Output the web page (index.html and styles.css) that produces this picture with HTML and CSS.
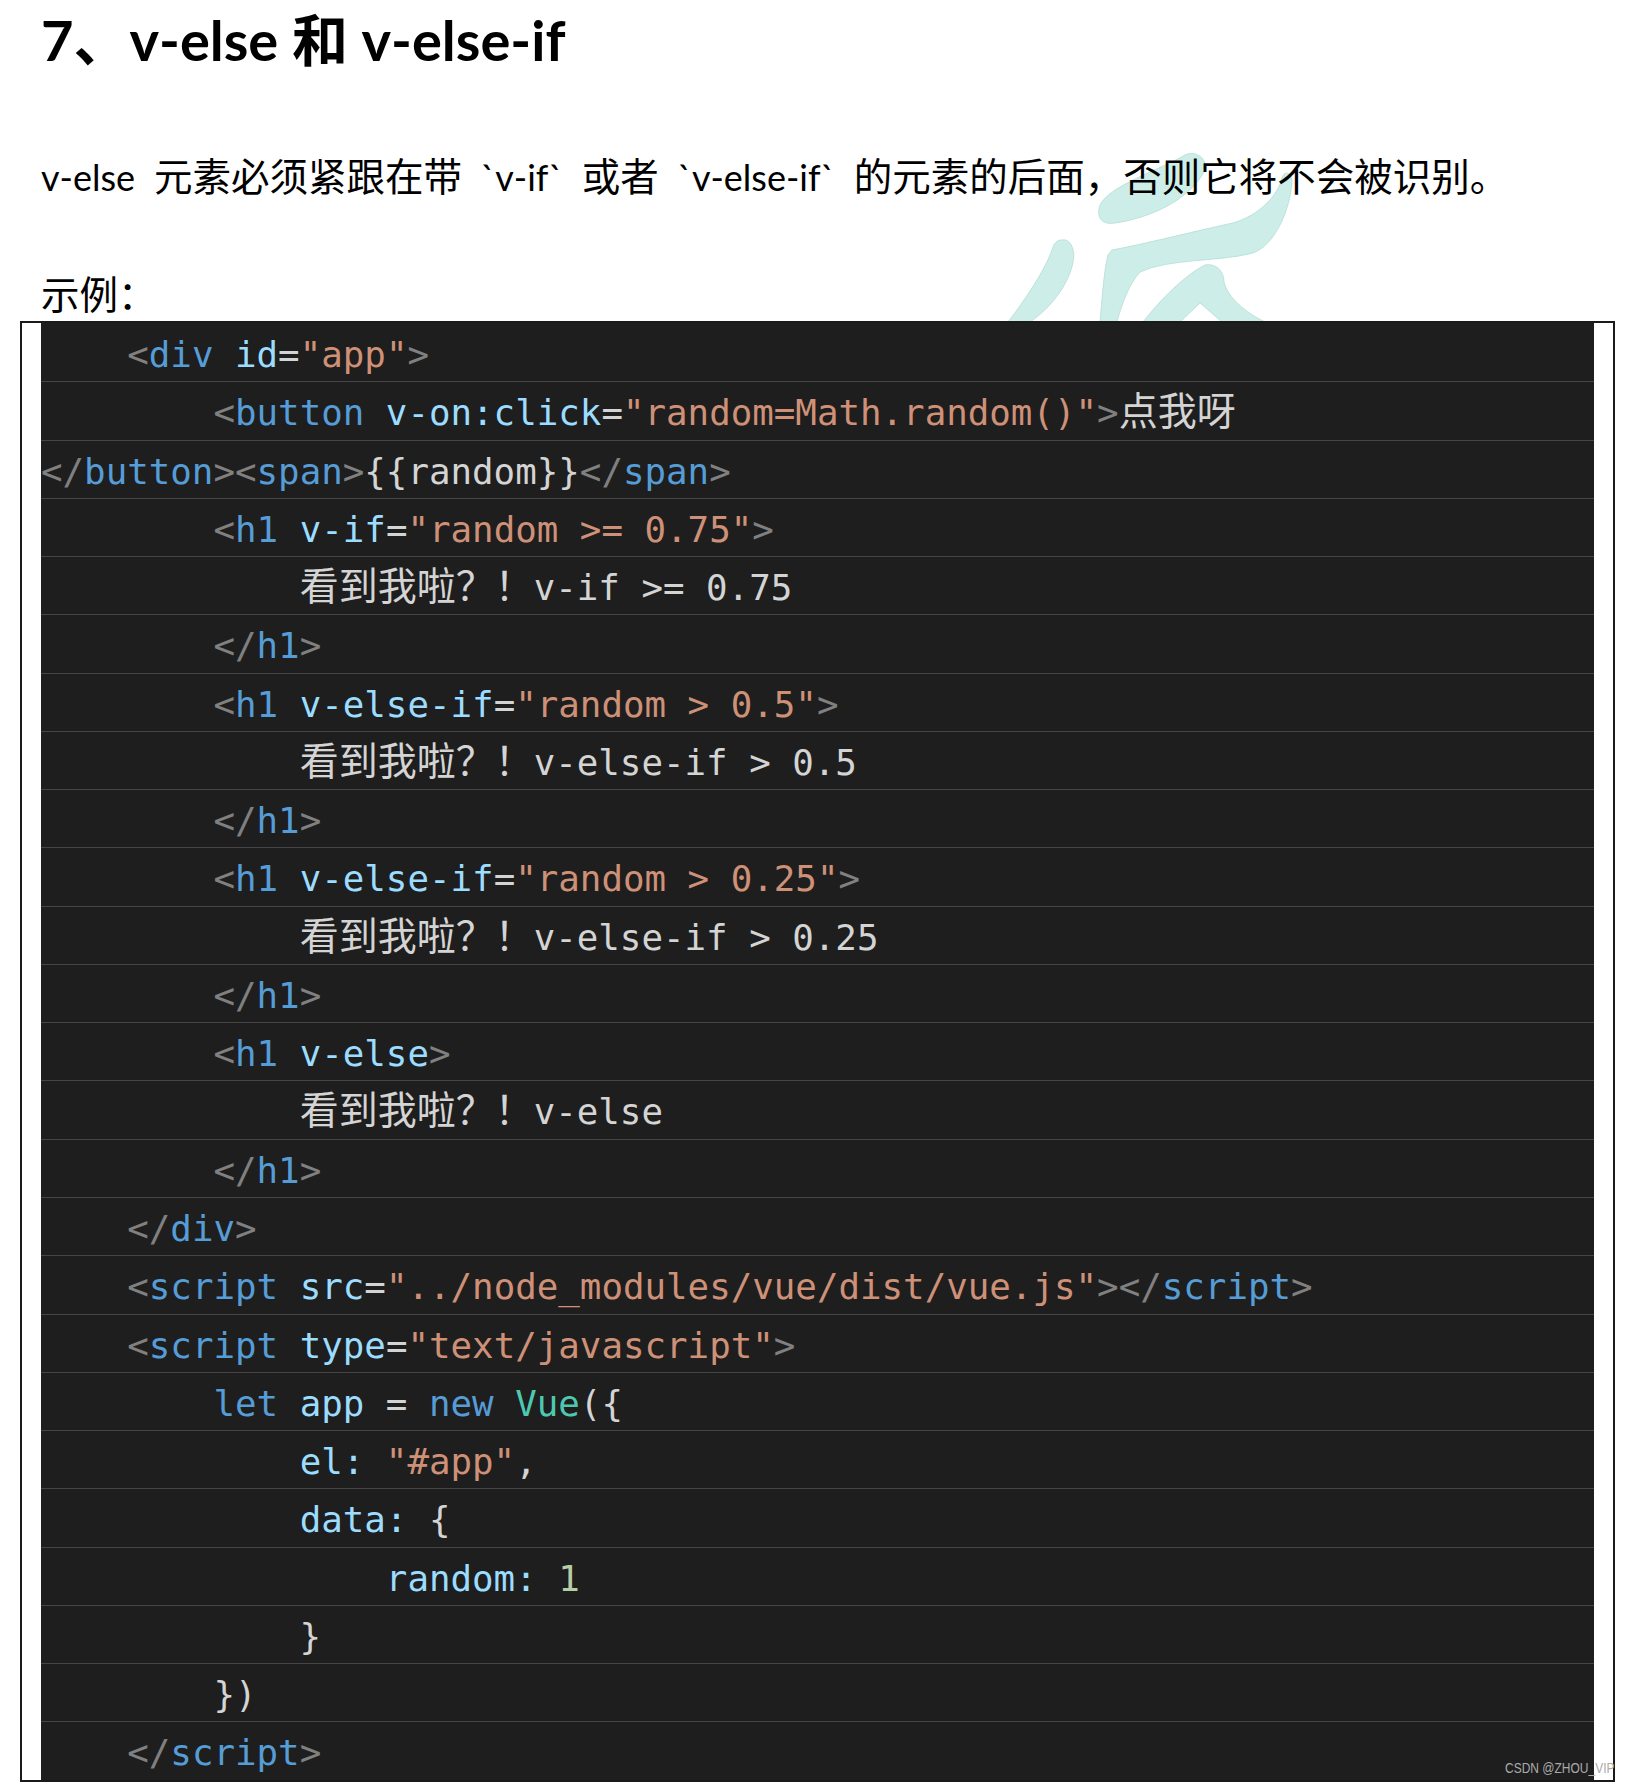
FILE: index.html
```html
<!DOCTYPE html>
<html lang="zh-CN">
<head>
<meta charset="utf-8">
<title>7、v-else 和 v-else-if</title>
<link rel="stylesheet" href="styles.css">
</head>
<body>
<svg class="wm" width="300" height="172" viewBox="0 0 300 172" xmlns="http://www.w3.org/2000/svg">
  <path d="M185,5 C160,20 110,35 100,55 C95,70 105,75 115,73 C150,68 190,50 205,20 C208,8 195,0 185,5 Z"/>
  <path d="M112,100 C140,95 200,80 233,73 C260,65 278,45 282,28 C284,20 292,22 292,32 C290,60 275,95 253,103 C220,112 170,108 140,122 C128,135 120,160 117,172 L100,172 C102,150 104,120 108,105 Z"/>
  <path d="M62,90 C70,88 76,100 73,112 C70,130 55,155 30,172 L8,172 C25,150 45,120 52,100 C54,93 57,90 62,90 Z"/>
  <path fill-rule="evenodd" d="M205,115 C215,113 224,120 224,132 C228,148 245,162 265,172 L143,172 C160,150 185,125 205,115 Z M200,153 L180,172 L222,172 Z"/>
</svg>
<div class="page">
  <h1 class="title">7、v-else 和 v-else-if</h1>
  <p class="desc"><span class="en">v-else</span> 元素必须紧跟在带 <span class="en">`v-if`</span> 或者 <span class="en">`v-else-if`</span> 的元素的后面，否则它将不会被识别。</p>
  <p class="label">示例：</p>
  <div class="frame">
    <div class="code">
<div class="row">    <span class="p">&lt;</span><span class="t">div</span> <span class="a">id</span>=<span class="s">"app"</span><span class="p">&gt;</span></div>
<div class="row">        <span class="p">&lt;</span><span class="t">button</span> <span class="a">v-on:click</span>=<span class="s">"random=Math.random()"</span><span class="p">&gt;</span><span class="cn">点我呀</span></div>
<div class="row"><span class="p">&lt;/</span><span class="t">button</span><span class="p">&gt;&lt;</span><span class="t">span</span><span class="p">&gt;</span>{{random}}<span class="p">&lt;/</span><span class="t">span</span><span class="p">&gt;</span></div>
<div class="row">        <span class="p">&lt;</span><span class="t">h1</span> <span class="a">v-if</span>=<span class="s">"random &gt;= 0.75"</span><span class="p">&gt;</span></div>
<div class="row">            <span class="cn">看到我啦？！</span>v-if &gt;= 0.75</div>
<div class="row">        <span class="p">&lt;/</span><span class="t">h1</span><span class="p">&gt;</span></div>
<div class="row">        <span class="p">&lt;</span><span class="t">h1</span> <span class="a">v-else-if</span>=<span class="s">"random &gt; 0.5"</span><span class="p">&gt;</span></div>
<div class="row">            <span class="cn">看到我啦？！</span>v-else-if &gt; 0.5</div>
<div class="row">        <span class="p">&lt;/</span><span class="t">h1</span><span class="p">&gt;</span></div>
<div class="row">        <span class="p">&lt;</span><span class="t">h1</span> <span class="a">v-else-if</span>=<span class="s">"random &gt; 0.25"</span><span class="p">&gt;</span></div>
<div class="row">            <span class="cn">看到我啦？！</span>v-else-if &gt; 0.25</div>
<div class="row">        <span class="p">&lt;/</span><span class="t">h1</span><span class="p">&gt;</span></div>
<div class="row">        <span class="p">&lt;</span><span class="t">h1</span> <span class="a">v-else</span><span class="p">&gt;</span></div>
<div class="row">            <span class="cn">看到我啦？！</span>v-else</div>
<div class="row">        <span class="p">&lt;/</span><span class="t">h1</span><span class="p">&gt;</span></div>
<div class="row">    <span class="p">&lt;/</span><span class="t">div</span><span class="p">&gt;</span></div>
<div class="row">    <span class="p">&lt;</span><span class="t">script</span> <span class="a">src</span>=<span class="s">"../node_modules/vue/dist/vue.js"</span><span class="p">&gt;&lt;/</span><span class="t">script</span><span class="p">&gt;</span></div>
<div class="row">    <span class="p">&lt;</span><span class="t">script</span> <span class="a">type</span>=<span class="s">"text/javascript"</span><span class="p">&gt;</span></div>
<div class="row">        <span class="k">let</span> <span class="a">app</span> = <span class="k">new</span> <span class="c">Vue</span>({</div>
<div class="row">            <span class="a">el:</span> <span class="s">"#app"</span>,</div>
<div class="row">            <span class="a">data:</span> {</div>
<div class="row">                <span class="a">random:</span> <span class="n">1</span></div>
<div class="row">            }</div>
<div class="row">        })</div>
<div class="row">    <span class="p">&lt;/</span><span class="t">script</span><span class="p">&gt;</span></div>
    </div>
  </div>
</div>
<div class="csdn">CSDN @ZHOU_VIP</div>
</body>
</html>
```
FILE: styles.css
```css
html {
  background: #fff;
}
body {
  margin: 0;
  padding: 0;
  position: relative;
  font-family: Lato, "Noto Sans CJK SC", sans-serif;
  color: #000;
}
.wm {
  position: absolute;
  left: 1000px;
  top: 150px;
  z-index: -1;
}
.wm path {
  fill: #cdeee8;
  stroke: #b2ddd4;
  stroke-width: 0.8;
}
.page {
  padding-left: 20px;
}
.title {
  margin: 0;
  padding: 5px 0 0 21px;
  font-size: 56px;
  line-height: 70px;
  font-weight: 700;
}
.desc {
  margin: 78px 0 0;
  padding-left: 21px;
  font-size: 38.5px;
  line-height: 46px;
  word-spacing: 9px;
}
.en {
  font-size: 36px;
}
.label {
  margin: 71px 0 0;
  padding-left: 21px;
  font-size: 38.5px;
  line-height: 46px;
}
.frame {
  margin-top: 4px;
  width: 1595px;
  box-sizing: border-box;
  border: 2px solid #1a1a1a;
  padding: 0 19px;
  background: #fff;
}
.code {
  background: #1e1e1e;
  font-family: "DejaVu Sans Mono", "Noto Sans CJK SC", monospace;
  font-size: 35.8px;
  color: #d4d4d4;
}
.row {
  height: 58.28px;
  box-sizing: border-box;
  line-height: 62px;
  white-space: pre;
  border-top: 1px solid #454545;
}
.row:first-child {
  border-top: 0;
  line-height: 63px;
}
.p { color: #808080; }
.t { color: #569cd6; }
.k { color: #569cd6; }
.a { color: #9cdcfe; }
.s { color: #ce9178; }
.c { color: #4ec9b0; }
.n { color: #b5cea8; }
.cn {
  font-size: 39px;
  line-height: 1;
}
.csdn {
  position: absolute;
  left: 1505px;
  top: 1759px;
  font-family: "Liberation Sans", Arial, sans-serif;
  font-size: 15px;
  color: #ababab;
  transform: scaleX(0.8);
  transform-origin: left center;
  white-space: nowrap;
}
```
